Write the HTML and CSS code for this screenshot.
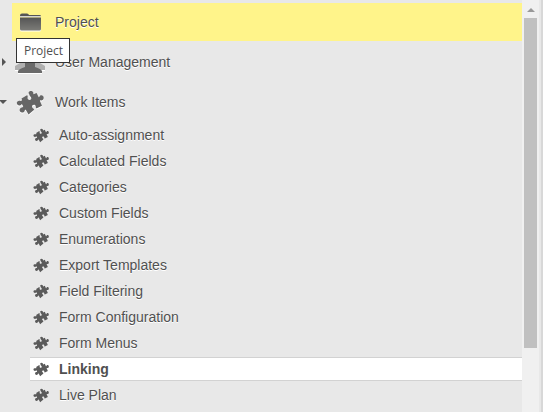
FILE: index.html
```
<!DOCTYPE html>
<html lang="en">
<head>
    <meta charset="UTF-8">
    <title>Administration</title>
    <link rel="stylesheet" href="styles.css">
</head>
<body>
    <svg class="symbols" aria-hidden="true">
        <defs>
            <linearGradient id="dark" x1="0" y1="0" x2="0" y2="1">
                <stop offset="0" stop-color="#555"/>
                <stop offset="1" stop-color="#7c7c78"/>
            </linearGradient>
            <symbol id="puzzle" viewBox="0 0 28 26">
                <path d="M5.500 8.500L11 5.300C12.500 6 11 7.800 12 9.300C13 10.600 15.300 10 15.300 8.200C15.300 6.500 13.500 6.200 13.400 5L13.200 4.200C12.700 3.700 12.400 3 12.800 2.100C13.600 .6 16.200 .6 17.100 2.100C17.500 3 17.100 3.700 17.600 4.200L20.600 3L22.700 7.300C23.700 7.300 23.500 6.100 24.300 5.500C25.800 4.600 27.700 5.800 27.700 7.700C27.700 9.700 26 10.700 24.700 10.300C24.200 10.200 23.900 10.400 23.900 10.900L26 15.800L20.800 18.300C19.200 18.200 20.300 16.400 19.200 15.300C18 14.300 16 15 16 16.700C16 18 17.700 18.200 18.200 19.800L12.500 24.600L9.900 19.900C9 19.500 8.900 20.200 8.600 20.900C7.900 22.800 5.200 23.100 4 21.400C3 19.700 4 17.600 5.800 17.400C7 17.200 7.400 17 7 16.100L6 14.300C5.400 13.800 5.200 14.800 4.500 15.300C3 16.200 .8 15 .8 13.100C.8 11.200 2.700 10.300 4.400 10.900C6 11.300 6.300 10.200 5.500 8.500Z"/>
            </symbol>
        </defs>
    </svg>
    <div class="panel">
        <nav class="tree">
            <ul class="topics">
                <li>
                    <a class="topic current" href="#project">
                        <svg class="icon" viewBox="0 0 30 30"><path fill="#555" d="M5 8.500Q5 6.500 7 6.500H12Q13.500 6.500 14 8H24.500Q26 8 26 9.300H5Z"/><path fill="url(#dark)" d="M5 10.500H26V22Q26 23.500 24.500 23.500H6.500Q5 23.500 5 22Z"/></svg>
                        <span>Project</span>
                    </a>
                    <div class="tooltip" role="tooltip">Project</div>
                </li>
                <li>
                    <a class="topic closed" href="#users">
                        <svg class="icon" viewBox="0 0 30 30"><path fill="#b0b0b0" d="M0 23V19L5 16V9H25V16L30 19V23Z"/><path fill="#6a6a6a" d="M3 26V24Q4 22 10 20V8H20V20Q26 22 27 24V26Z"/></svg>
                        <span>User Management</span>
                    </a>
                </li>
                <li>
                    <a class="topic open" href="#items">
                        <svg class="icon" viewBox="0 0 30 30"><use href="#puzzle" x="1" y="3" width="28" height="26"/></svg>
                        <span>Work Items</span>
                    </a>
                    <ul class="pages">
                        <li><a class="page" href="#auto"><svg><use href="#puzzle"/></svg>Auto-assignment</a></li>
                        <li><a class="page" href="#calculated"><svg><use href="#puzzle"/></svg>Calculated Fields</a></li>
                        <li><a class="page" href="#categories"><svg><use href="#puzzle"/></svg>Categories</a></li>
                        <li><a class="page" href="#custom"><svg><use href="#puzzle"/></svg>Custom Fields</a></li>
                        <li><a class="page" href="#enums"><svg><use href="#puzzle"/></svg>Enumerations</a></li>
                        <li><a class="page" href="#export"><svg><use href="#puzzle"/></svg>Export Templates</a></li>
                        <li><a class="page" href="#filtering"><svg><use href="#puzzle"/></svg>Field Filtering</a></li>
                        <li><a class="page" href="#form"><svg><use href="#puzzle"/></svg>Form Configuration</a></li>
                        <li><a class="page" href="#menus"><svg><use href="#puzzle"/></svg>Form Menus</a></li>
                        <li><a class="page selected" href="#linking"><svg><use href="#puzzle"/></svg>Linking</a></li>
                        <li><a class="page" href="#plan"><svg><use href="#puzzle"/></svg>Live Plan</a></li>
                    </ul>
                </li>
            </ul>
        </nav>
        <div class="scrollbar" aria-hidden="true">
            <div class="arrow"></div>
            <div class="thumb"></div>
        </div>
    </div>
</body>
</html>
```
FILE: styles.css
```
body {
    margin: 0;
    background: #fff;
    color: #505050;
    font: 14px/26px "Liberation Sans", Arial, sans-serif;
}
ul {
    margin: 0;
    padding: 0;
    list-style: none;
}
a {
    color: inherit;
    text-decoration: none;
}
.symbols {
    position: absolute;
    width: 0;
    height: 0;
}

.panel {
    display: flex;
    height: 100vh;
    margin-right: 2px;
    border-right: 2px solid #d8d8d8;
    box-sizing: border-box;
    background: #e8e8e8;
}
.tree {
    flex: 1;
    overflow: hidden;
    padding-top: 3px;
    text-shadow: 0 1px 0 #fff;
}
.topics > li {
    position: relative;
}
.topic {
    position: relative;
    display: flex;
    align-items: center;
    gap: 10px;
    height: 38px;
    margin: 0 0 2px 12px;
    padding-left: 3px;
}
.current {
    background: #fff48a;
}
.icon {
    width: 30px;
    height: 30px;
    fill: #666;
    filter: drop-shadow(0 1px 0 #fff);
}
/* twisty in the gutter */
.closed::before,
.open::before {
    content: "";
    position: absolute;
    top: 15px;
    left: -10px;
    border: 4px solid transparent;
    border-left: 4px solid #555;
}
.open::before {
    top: 17px;
    left: -13px;
    border: 4px solid transparent;
    border-top: 4px solid #555;
}

.pages {
    display: flow-root;
    margin: -1px 0 0 30px;
}
.page {
    display: flex;
    align-items: center;
    gap: 10px;
    height: 26px;
    padding-left: 3px;
}
.page svg {
    width: 16px;
    height: 15px;
    fill: #5a5a5a;
}
.selected {
    height: 22px;
    margin: 1px 0;
    border: solid #d2d2d2;
    border-width: 1px 0;
    background: #fff;
    font-weight: bold;
}

.tooltip {
    position: absolute;
    z-index: 1;
    top: 35px;
    left: 16px;
    padding: 0 6px 0 7px;
    border: 1px solid #333;
    background: #fff;
    color: #505050;
    font: 12px/23px "Open Sans", "Noto Sans", sans-serif;
    text-shadow: none;
}

.scrollbar {
    flex: none;
    width: 17px;
    padding: 0 2px;
    margin-right: 2px;
    box-sizing: border-box;
    background: #f0f0f0;
}
.arrow {
    height: 18px;
    padding-top: 4px;
    box-sizing: border-box;
}
.arrow::before {
    content: "";
    display: block;
    width: 0;
    margin: auto;
    border: 4px solid transparent;
    border-bottom-color: #999;
}
.thumb {
    height: 80%;
    background: #c0c0c0;
}
```
